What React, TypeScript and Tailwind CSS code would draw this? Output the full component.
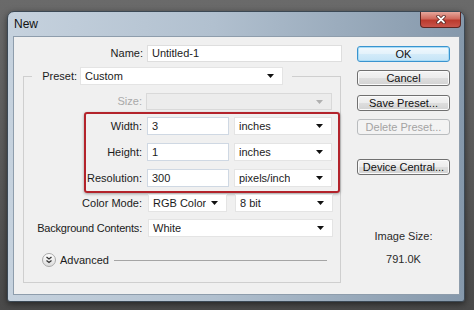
import React from "react";

function Arrow({ disabled }: { disabled?: boolean }) {
  return (
    <svg width="7" height="4" viewBox="0 0 7 4" className="shrink-0">
      <path d="M0 0h7L3.5 4z" fill={disabled ? "#b0b0b0" : "#111"} />
    </svg>
  );
}

function Select({
  value,
  className,
  disabled,
}: {
  value?: string;
  className: string;
  disabled?: boolean;
}) {
  return (
    <div
      className={`flex items-center justify-between pl-[4px] pr-[8px] border ${
        disabled ? "bg-[#ececec] border-[#d9d9d9]" : "bg-white border-[#e4e4e4]"
      } ${className}`}
    >
      <span className="truncate">{value}</span>
      <Arrow disabled={disabled} />
    </div>
  );
}

function Input({ value, className }: { value: string; className: string }) {
  return (
    <div className={`flex items-center pl-[4px] bg-white border border-[#cfd8e3] ${className}`}>
      {value}
    </div>
  );
}

function Button({
  label,
  kind,
  className = "",
}: {
  label: string;
  kind?: "primary" | "disabled";
  className?: string;
}) {
  const look =
    kind === "primary"
      ? "border-[#3a94cf] shadow-[inset_0_0_0_1px_#a9dcf6] bg-[linear-gradient(#f1f8fd_0%,#e3f2fb_50%,#d3ebf9_51%,#c5e4f7_100%)] text-[#111]"
      : kind === "disabled"
      ? "border-[#b9bcbe] bg-[#f3f3f3] text-[#a3a3a3]"
      : "border-[#707070] shadow-[inset_0_0_0_1px_#fbfbfb] bg-[linear-gradient(#f4f4f4_0%,#ececec_50%,#dedede_51%,#d2d2d2_100%)] text-[#111]";
  return (
    <div
      className={`w-[93px] h-[16px] rounded-[3px] border flex items-center justify-center leading-none ${look} ${className}`}
    >
      {label}
    </div>
  );
}

export default function App() {
  return (
    <div className="w-[474px] h-[310px] bg-[linear-gradient(#6a6a6a,#4a4a4a)] pt-[11px] pl-[7px] font-['Liberation_Sans',Arial,sans-serif] text-[11px] text-[#1b1b1b]">
      <div className="w-[458px] h-[291px] rounded-t-[7px] rounded-b-[3px] border border-[#3b4854] bg-[linear-gradient(90deg,#c6d2de_0%,#b1c0cf_45%,#8598ab_100%)] flex flex-col shadow-[0_2px_6px_rgba(0,0,0,0.5)]">
        {/* title bar */}
        <div className="h-[24px] flex justify-between shrink-0">
          <div className="pl-[6px] pt-[6px] text-[12px] leading-none text-[#111]">New</div>
          <div className="mr-[3px] w-[41px] h-[16px] rounded-b-[4px] border border-t-0 border-[#5e2622] bg-[linear-gradient(#e6a79c_0%,#d06a5d_45%,#bb3a2d_55%,#c8544a_100%)] flex items-center justify-center">
            <svg width="10" height="9" viewBox="0 0 10 9">
              <path d="M2 1.5l6 6M8 1.5l-6 6" stroke="#4a1a16" strokeWidth="3.2" strokeLinecap="round" />
              <path d="M2 1.5l6 6M8 1.5l-6 6" stroke="#fff" strokeWidth="1.8" strokeLinecap="round" />
            </svg>
          </div>
        </div>

        {/* frame + client area */}
        <div className="flex-1 pl-[5px] pr-[4px] pb-[6px]">
          <div className="h-full bg-[#f0f0f0] shadow-[inset_0_0_0_1px_#8e9dac] flex pt-[9px]">
            {/* left column */}
            <div className="w-[331px] shrink-0">
              <div className="flex items-center h-[17px]">
                <div className="w-[130px] text-right">Name:</div>
                <Input value="Untitled-1" className="ml-[4px] w-[195px] h-[17px] border-[#dedede]" />
              </div>

              <fieldset className="mt-[5px] ml-[10px] w-[318px] border border-[#cfcfcf] pb-[15px]">
                <legend className="ml-[8px] pr-[9px]">
                  <div className="flex items-center h-[18px]">
                    <div className="w-[45px] text-right">Preset:</div>
                    <Select value="Custom" className="ml-[3px] w-[203px] h-[18px]" />
                  </div>
                </legend>

                <div className="flex items-center mt-[8px]">
                  <div className="w-[118px] text-right text-[#a9a9a9]">Size:</div>
                  <Select disabled className="ml-[4px] w-[186px] h-[17px]" />
                </div>

                <div className="mt-[2px] ml-[60px] w-[256px] border-2 border-[#b3232b] rounded-[3px] shadow-[0_1px_3px_rgba(0,0,0,0.35)] pt-[3px] pb-[4px] flex flex-col gap-[8px]">
                  {[
                    ["Width:", "3", "inches"],
                    ["Height:", "1", "inches"],
                    ["Resolution:", "300", "pixels/inch"],
                  ].map(([label, v, unit]) => (
                    <div key={label} className="flex items-center h-[18px]">
                      <div className="w-[56px] text-right">{label}</div>
                      <Input value={v} className="ml-[5px] w-[82px] h-[18px]" />
                      <Select value={unit} className="ml-[5px] w-[98px] h-[18px]" />
                    </div>
                  ))}
                </div>

                <div className="flex items-center mt-[1px] h-[18px]">
                  <div className="w-[118px] text-right">Color Mode:</div>
                  <Select value="RGB Color" className="ml-[6px] w-[79px] h-[18px]" />
                  <Select value="8 bit" className="ml-[8px] w-[98px] h-[18px]" />
                </div>

                <div className="flex items-center mt-[7px] h-[18px]">
                  <div className="w-[118px] text-right tracking-[-0.2px]">Background Contents:</div>
                  <Select value="White" className="ml-[6px] w-[185px] h-[18px]" />
                </div>

                <div className="flex items-center mt-[16px] h-[14px]">
                  <div className="ml-[18px] w-[14px] h-[14px] rounded-full border border-[#a9a9a9] bg-[linear-gradient(#ffffff,#dcdcdc)] flex items-center justify-center">
                    <svg width="8" height="8" viewBox="0 0 8 8">
                      <path d="M1.5 1l2.5 2 2.5-2M1.5 4.5l2.5 2 2.5-2" fill="none" stroke="#333" strokeWidth="1.3" />
                    </svg>
                  </div>
                  <div className="ml-[4px]">Advanced</div>
                  <div className="ml-[5px] mr-[13px] flex-1 h-px bg-[#a5a5a5]" />
                </div>
              </fieldset>
            </div>

            {/* right column */}
            <div className="ml-[13px] w-[93px] pt-[1px] flex flex-col items-center">
              <Button label="OK" kind="primary" />
              <Button label="Cancel" className="mt-[8px]" />
              <Button label="Save Preset..." className="mt-[9px]" />
              <Button label="Delete Preset..." kind="disabled" className="mt-[8px]" />
              <Button label="Device Central..." className="mt-[24px]" />
              <div className="mt-[53px] text-[#2a2a2a]">Image Size:</div>
              <div className="mt-[6px] text-[#2a2a2a]">791.0K</div>
            </div>
          </div>
        </div>
      </div>
    </div>
  );
}
